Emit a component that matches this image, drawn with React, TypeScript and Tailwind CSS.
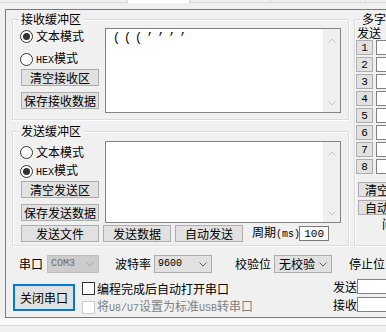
import React from "react";

const MONO = "font-['Liberation_Mono',monospace]";

function Chevron({ color }: { color: string }) {
  return (
    <svg width="8" height="5" viewBox="0 0 8 5" className="block">
      <polyline points="0.5,0.5 4,4 7.5,0.5" fill="none" stroke={color} strokeWidth="1" />
    </svg>
  );
}

function UpChevron({ color }: { color: string }) {
  return (
    <svg width="8" height="5" viewBox="0 0 8 5" className="block">
      <polyline points="0.5,4.5 4,1 7.5,4.5" fill="none" stroke={color} strokeWidth="1" />
    </svg>
  );
}

function Radio({ checked }: { checked?: boolean }) {
  return (
    <span className="w-[13px] h-[13px] rounded-full border border-[#333333] bg-white flex items-center justify-center shrink-0">
      {checked ? <span className="w-[7px] h-[7px] rounded-full bg-[#333333]" /> : null}
    </span>
  );
}

function Check({ disabled }: { disabled?: boolean }) {
  return (
    <span
      className={
        disabled
          ? "w-[13px] h-[13px] border border-[#cccccc] bg-white shrink-0"
          : "w-[13px] h-[13px] border border-[#333333] bg-white shrink-0"
      }
    />
  );
}

function Btn({ children, className }: { children: React.ReactNode; className: string }) {
  return (
    <div
      className={
        "border border-[#adadad] bg-[#e1e1e1] flex items-center justify-center whitespace-nowrap shrink-0 " +
        className
      }
    >
      {children}
    </div>
  );
}

function Memo({ className, text }: { className: string; text?: string }) {
  return (
    <div className={"w-[236px] border border-[#828282] bg-white flex shrink-0 " + className}>
      <div className={"flex-1 pl-[7px] pt-[3px] text-[12px] leading-[12px] tracking-[3.8px] " + MONO}>
        {text}
      </div>
      <div className="w-[17px] bg-[#f0f0f0] flex flex-col justify-between">
        <div className="h-[20px] flex items-center justify-center pt-[2px]">
          <UpChevron color="#c4c4c4" />
        </div>
        <div className="h-[17px] flex items-center justify-center">
          <Chevron color="#c4c4c4" />
        </div>
      </div>
    </div>
  );
}

function Combo({
  className,
  children,
  disabled,
}: {
  className: string;
  children: React.ReactNode;
  disabled?: boolean;
}) {
  return (
    <div
      className={
        "h-[18px] border flex items-center justify-between pr-[4px] shrink-0 " +
        (disabled
          ? "bg-[#cccccc] border-[#bfbfbf] text-[#6d6d6d] "
          : "bg-[#e1e1e1] border-[#adadad] ") +
        className
      }
    >
      {children}
      <Chevron color={disabled ? "#a6a6a6" : "#606060"} />
    </div>
  );
}

function Group({
  title,
  className,
  legendClass,
  children,
}: {
  title: string;
  className: string;
  legendClass: string;
  children: React.ReactNode;
}) {
  return (
    <fieldset
      className={
        "min-w-0 border border-[#dcdcdc] shadow-[inset_1px_1px_0_#ffffff,1px_1px_0_#ffffff] shrink-0 " +
        className
      }
    >
      <legend className={"px-[2px] leading-[12px] bg-[#f0f0f0] whitespace-nowrap " + legendClass}>{title}</legend>
      {children}
    </fieldset>
  );
}

export default function App() {
  return (
    <div className="w-[386px] h-[332px] overflow-hidden bg-[#f0f0f0] text-black text-[12px] leading-[12px] font-['Noto_Sans_CJK_SC',sans-serif] flex flex-col">
      {/* top tab strip */}
      <div className="h-[9px] shrink-0 flex flex-col bg-[#f0f0f0]">
        <div className="h-[3px] flex">
          <div className="w-[129px] bg-[#f0f0f0] border-r border-b border-[#d9d9d9]" />
          <div className="w-[63px] bg-white border-r border-[#d9d9d9]" />
          <div className="w-[82px] bg-[#f0f0f0] border-r border-b border-[#d9d9d9]" />
          <div className="w-[96px] bg-[#f0f0f0] border-r border-b border-[#d9d9d9]" />
          <div className="w-[20px] bg-[#f0f0f0] border-b border-[#d9d9d9]" />
        </div>
      </div>

      {/* main frame */}
      <div className="ml-[5px] w-[400px] h-[309px] shrink-0 border-l border-t border-b border-[#7a7a7a] flex flex-col">
        <div className="flex pl-[6px] pt-[3px]">
          <div className="flex flex-col w-[337px] shrink-0">
            {/* receive buffer */}
            <Group title="接收缓冲区" className="h-[107px]" legendClass="ml-[6px]">
              <div className="flex">
                <div className="ml-[7px] w-[85px] flex flex-col shrink-0">
                  <div className="mt-[4px] h-[14px] flex items-center gap-[3px]">
                    <Radio checked />
                    <span>文本模式</span>
                  </div>
                  <div className="mt-[9px] h-[14px] flex items-center gap-[3px]">
                    <Radio />
                    <span>
                      <span className={"text-[10px] " + MONO}>HEX</span>模式
                    </span>
                  </div>
                  <Btn className="mt-[3px] ml-[1px] w-[78px] h-[17px]">清空接收区</Btn>
                  <Btn className="mt-[6px] ml-[1px] w-[78px] h-[17px]">保存接收数据</Btn>
                </div>
                <Memo className="mt-[3px] h-[85px]" text="(((’’’’" />
              </div>
            </Group>

            {/* send buffer */}
            <Group title="发送缓冲区" className="mt-[5px] h-[121px]" legendClass="ml-[6px]">
              <div className="flex">
                <div className="ml-[7px] w-[85px] flex flex-col shrink-0">
                  <div className="mt-[8px] h-[14px] flex items-center gap-[3px]">
                    <Radio />
                    <span>文本模式</span>
                  </div>
                  <div className="mt-[5px] h-[14px] flex items-center gap-[3px]">
                    <Radio checked />
                    <span>
                      <span className={"text-[10px] " + MONO}>HEX</span>模式
                    </span>
                  </div>
                  <Btn className="mt-[3px] ml-[1px] w-[78px] h-[17px]">清空发送区</Btn>
                  <Btn className="mt-[6px] ml-[1px] w-[78px] h-[17px]">保存发送数据</Btn>
                </div>
                <Memo className="mt-[4px] h-[82px]" />
              </div>
              <div className="mt-[2px] h-[17px] flex items-center">
                <Btn className="ml-[8px] w-[78px] h-[17px]">发送文件</Btn>
                <Btn className="ml-[4px] w-[68px] h-[17px]">发送数据</Btn>
                <Btn className="ml-[4px] w-[68px] h-[17px]">自动发送</Btn>
                <span className="ml-[9px] w-[47px] whitespace-nowrap">
                  周期<span className={"text-[10px] " + MONO}>(ms)</span>
                </span>
                <div
                  className={
                    "w-[30px] h-[15px] border border-[#7a7a7a] bg-white flex items-center justify-end pr-[4px] text-[11px] " +
                    MONO
                  }
                >
                  100
                </div>
              </div>
            </Group>
          </div>

          {/* multi-string send */}
          <Group title="多字符串发送" className="ml-[5px] w-[60px] h-[233px]" legendClass="ml-[5px]">
            <div className="flex flex-col">
              <span className="ml-[2px] mt-[2px] whitespace-nowrap">发送</span>
              <div className="mt-[1px] flex flex-col gap-[2px]">
                {["1", "2", "3", "4", "5", "6", "7", "8"].map((n) => (
                  <div key={n} className="flex h-[15px]">
                    <Btn className={"ml-[1px] w-[17px] h-[15px] text-[11px] " + MONO}>{n}</Btn>
                    <div className="ml-[3px] w-[40px] h-[15px] border border-[#828282] bg-white" />
                  </div>
                ))}
              </div>
              <Btn className="mt-[8px] ml-[3px] w-[45px] h-[15px] justify-start pl-[6px]">清空全部</Btn>
              <Btn className="mt-[3px] ml-[3px] w-[45px] h-[15px] justify-start pl-[6px]">自动循环</Btn>
              <span className="mt-[3px] ml-[27px] whitespace-nowrap">间隔</span>
            </div>
          </Group>
        </div>

        {/* serial settings */}
        <div className="mt-[9px] h-[18px] flex items-center pl-[13px] whitespace-nowrap">
          <span>串口</span>
          <Combo className="ml-[4px] w-[52px] pl-[3px]" disabled>
            <span className={"text-[10px] " + MONO}>COM3</span>
          </Combo>
          <span className="ml-[16px]">波特率</span>
          <Combo className="ml-[3px] w-[58px] pl-[3px]">
            <span className={"text-[10px] " + MONO}>9600</span>
          </Combo>
          <span className="ml-[23px]">校验位</span>
          <Combo className="ml-[3px] w-[58px] pl-[4px]">
            <span>无校验</span>
          </Combo>
          <span className="ml-[17px]">停止位</span>
        </div>

        <div className="mt-[6px] flex items-start whitespace-nowrap">
          <div className="ml-[7px] mt-[5px] w-[62px] h-[27px] border-2 border-[#0078d7] bg-[#e1e1e1] flex items-center justify-center shrink-0">
            关闭串口
          </div>
          <div className="ml-[7px] w-[251px] flex flex-col shrink-0">
            <div className="mt-[3px] h-[13px] flex items-center gap-[2px]">
              <Check />
              <span>编程完成后自动打开串口</span>
            </div>
            <div className="mt-[6px] h-[13px] flex items-center gap-[2px] text-[#808080]">
              <Check disabled />
              <span>
                将<span className={"text-[10px] " + MONO}>U8/U7</span>设置为标准
                <span className={"text-[10px] " + MONO}>USB</span>转串口
              </span>
            </div>
          </div>
          <div className="flex flex-col">
            <div className="h-[15px] flex items-center">
              <span className="w-[24px]">发送</span>
              <div className="w-[40px] h-[15px] border border-[#828282] bg-white" />
            </div>
            <div className="mt-[3px] h-[15px] flex items-center">
              <span className="w-[24px]">接收</span>
              <div className="w-[40px] h-[15px] border border-[#828282] bg-white" />
            </div>
          </div>
        </div>
      </div>

      {/* below frame */}
      <div className="h-[7px] shrink-0 bg-[#f9f9f9]" />
      <div className="h-[1px] shrink-0 bg-[#dadada]" />
      <div className="flex-1 bg-[#f0f0f0]" />
    </div>
  );
}
